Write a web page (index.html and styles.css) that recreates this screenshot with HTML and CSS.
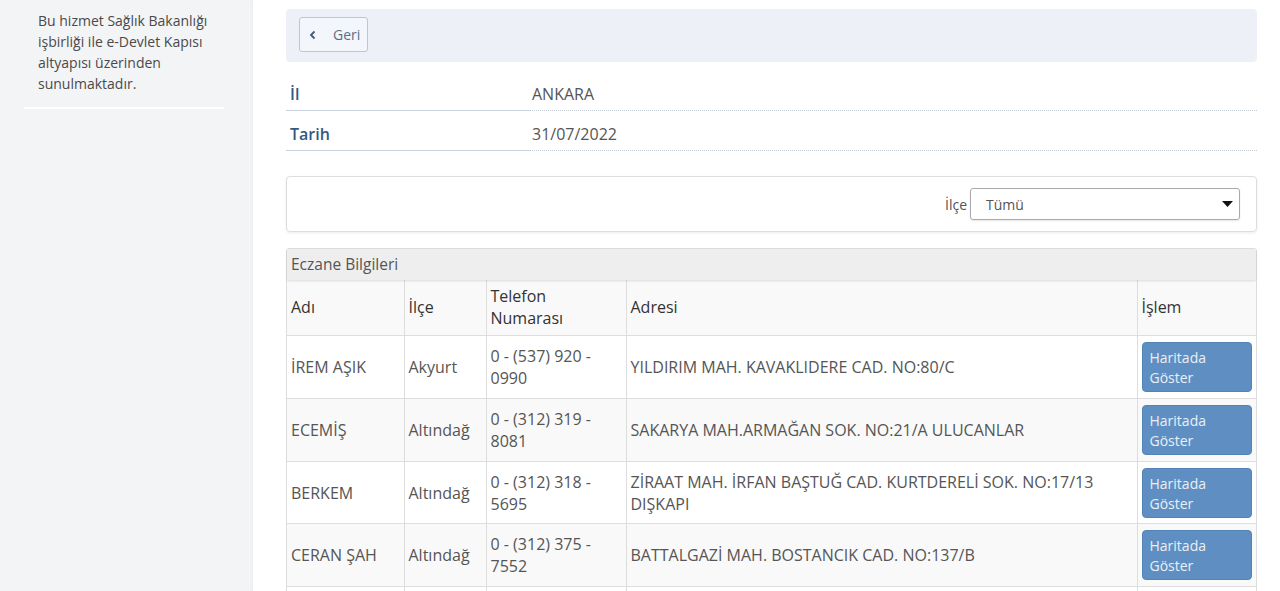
FILE: index.html
```html
<!DOCTYPE html>
<html lang="tr">
<head>
<meta charset="utf-8">
<title>Nöbetçi Eczaneler</title>
<link rel="stylesheet" href="styles.css">
</head>
<body>
<div class="layout">
  <aside class="sidebar">
    <p class="side-note">Bu hizmet Sağlık Bakanlığı işbirliği ile e-Devlet Kapısı altyapısı üzerinden sunulmaktadır.</p>
    <div class="side-divider"></div>
  </aside>
  <main class="main">
    <div class="topbar">
      <button class="back-btn" type="button">
        <svg class="chev" width="8" height="10" viewBox="0 0 8 10"><path d="M5.5 1.5 L2 5 L5.5 8.5" fill="none" stroke="#44597a" stroke-width="1.8"/></svg>
        <span>Geri</span>
      </button>
    </div>

    <dl class="info">
      <div class="info-row">
        <dt class="info-label">İl</dt>
        <dd class="info-value">ANKARA</dd>
      </div>
      <div class="info-row">
        <dt class="info-label">Tarih</dt>
        <dd class="info-value">31/07/2022</dd>
      </div>
    </dl>

    <div class="filter-panel">
      <label class="filter-label">İlçe</label>
      <div class="select">
        <span>Tümü</span>
        <svg class="caret" width="11" height="6" viewBox="0 0 11 6"><path d="M0 0 H11 L5.5 6 Z" fill="#111"/></svg>
      </div>
    </div>

    <section class="table-panel">
      <div class="panel-heading">Eczane Bilgileri</div>
      <table class="ectable">
        <colgroup>
          <col class="c-name"><col class="c-ilce"><col class="c-tel"><col class="c-adres"><col class="c-islem">
        </colgroup>
        <tbody>
          <tr class="head">
            <th>Adı</th><th>İlçe</th><th>Telefon Numarası</th><th>Adresi</th><th>İşlem</th>
          </tr>
          <tr>
            <td>İREM AŞIK</td><td>Akyurt</td><td>0 - (537) 920 - 0990</td><td>YILDIRIM MAH. KAVAKLIDERE CAD. NO:80/C</td>
            <td><a class="map-btn">Haritada Göster</a></td>
          </tr>
          <tr>
            <td>ECEMİŞ</td><td>Altındağ</td><td>0 - (312) 319 - 8081</td><td>SAKARYA MAH.ARMAĞAN SOK. NO:21/A ULUCANLAR</td>
            <td><a class="map-btn">Haritada Göster</a></td>
          </tr>
          <tr>
            <td>BERKEM</td><td>Altındağ</td><td>0 - (312) 318 - 5695</td><td>ZİRAAT MAH. İRFAN BAŞTUĞ CAD. KURTDERELİ SOK. NO:17/13 DIŞKAPI</td>
            <td><a class="map-btn">Haritada Göster</a></td>
          </tr>
          <tr>
            <td>CERAN ŞAH</td><td>Altındağ</td><td>0 - (312) 375 - 7552</td><td>BATTALGAZİ MAH. BOSTANCIK CAD. NO:137/B</td>
            <td><a class="map-btn">Haritada Göster</a></td>
          </tr>
          <tr class="filler">
            <td>&nbsp;</td><td>&nbsp;</td><td>&nbsp;</td><td>&nbsp;</td><td>&nbsp;</td>
          </tr>
        </tbody>
      </table>
    </section>
  </main>
</div>
</body>
</html>
```

FILE: styles.css
```css
* { box-sizing: border-box; }
html, body {
  margin: 0;
  padding: 0;
  height: 591px;
  overflow: hidden;
}
body {
  font-family: "Open Sans", "Noto Sans", sans-serif;
  color: #555;
  background: #fff;
}
.layout {
  display: flex;
  height: 591px;
}
.sidebar {
  width: 253px;
  flex: none;
  background: #f3f4f6;
  padding: 10px 29px 0 24px;
  box-shadow: inset -3px 0 4px -3px rgba(0,0,0,0.06);
}
.side-note {
  margin: 0;
  padding-left: 14px;
  font-size: 14px;
  line-height: 21px;
  color: #4a4a4a;
}
.side-divider {
  margin-top: 13px;
  height: 2px;
  background: #fff;
}
.main {
  flex: 1;
  padding: 9px 23px 0 33px;
  min-width: 0;
}
.topbar {
  background: #edf1f7;
  border-radius: 4px;
  height: 53px;
  padding: 8px 13px;
}
.back-btn {
  display: flex;
  align-items: center;
  height: 35px;
  width: 69px;
  padding: 0 0 0 9px;
  background: #f3f6fa;
  border: 1px solid #b9c8d8;
  border-radius: 3px;
  font-family: inherit;
  font-size: 14px;
  color: #5b6f88;
  cursor: pointer;
}
.back-btn .chev { margin-right: 16px; }
.info {
  margin: 9px 0 0 0;
}
.info-row {
  display: flex;
}
.info-label {
  width: 244px;
  flex: none;
  margin: 0;
  padding: 12px 4px 5px;
  font-size: 16px;
  line-height: 22px;
  font-weight: 600;
  color: #35597f;
  border-bottom: 1px solid #c8d3df;
}
.info-value {
  flex: 1;
  margin: 0;
  padding: 12px 2px 5px;
  font-size: 16px;
  line-height: 22px;
  color: #555;
  border-bottom: 1px dotted #c6ccd3;
}
.filter-panel {
  margin-top: 25px;
  height: 56px;
  border: 1px solid #ddd;
  border-radius: 4px;
  box-shadow: 0 1px 3px rgba(0,0,0,0.08);
  display: flex;
  align-items: center;
  justify-content: flex-end;
  padding: 0 16px;
}
.filter-label {
  font-size: 14px;
  color: #555;
  margin-right: 3px;
}
.select {
  width: 270px;
  height: 32px;
  border: 1px solid #aaa;
  border-radius: 3px;
  display: flex;
  align-items: center;
  justify-content: space-between;
  padding: 0 6px 0 15px;
  font-size: 14px;
  color: #555;
  box-shadow: 0 1px 2px rgba(0,0,0,0.1);
}
.table-panel {
  margin-top: 16px;
  border: 1px solid #ddd;
  border-radius: 3px 3px 0 0;
}
.panel-heading {
  background: #eeeeee;
  height: 31px;
  padding: 0 4px;
  font-size: 15.5px;
  line-height: 31px;
  color: #555;
  box-shadow: 0 1px 2px rgba(0,0,0,0.12);
  position: relative;
}
.ectable {
  width: 100%;
  table-layout: fixed;
  border-collapse: collapse;
}
.c-name { width: 117px; }
.c-ilce { width: 82px; }
.c-tel { width: 140px; }
.c-islem { width: 119px; }
.ectable th,
.ectable td {
  border: 1px solid #ddd;
  padding: 6px 4px 5.75px;
  font-size: 16px;
  line-height: 22px;
  text-align: left;
  vertical-align: middle;
  color: #555;
}
.ectable tr > :first-child { border-left: none; }
.ectable tr > :last-child { border-right: none; }
.ectable tr.head th {
  font-weight: 500;
  color: #333;
  border-top: none;
  padding: 5px 4px 6px;
}
.ectable tbody tr:nth-child(odd) { background: #f9f9f9; }
.ectable tbody tr:nth-child(even) { background: #fff; }
.ectable tr.filler td { height: 62px; }
.map-btn {
  display: block;
  width: 110px;
  height: 50px;
  padding: 5px 7px;
  background: #5f8fc2;
  border: 1px solid #5284b8;
  border-radius: 4px;
  font-size: 14px;
  line-height: 20px;
  color: #e9eff7;
  cursor: pointer;
}
```
